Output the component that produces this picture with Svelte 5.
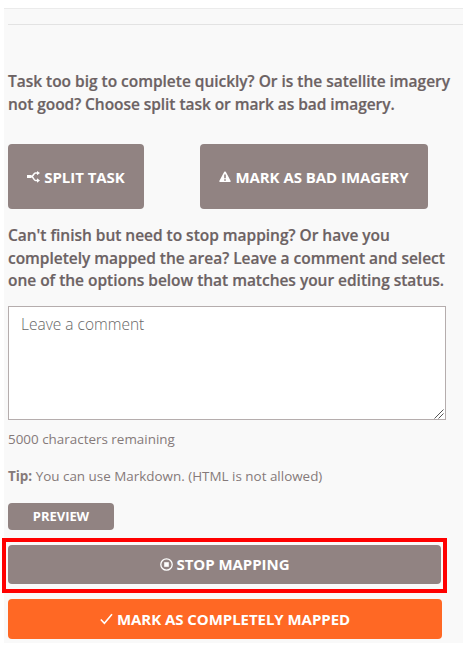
<script>
  const splitLines = [
    'Task too big to complete quickly? Or is the satellite imagery',
    'not good? Choose split task or mark as bad imagery.'
  ];
  const stopLines = [
    "Can't finish but need to stop mapping? Or have you",
    'completely mapped the area? Leave a comment and select',
    'one of the options below that matches your editing status.'
  ];
</script>

<main>
  <section class="panel">
    <hr />
    <p class="lead first">{#each splitLines as line}<span>{line}</span>{/each}</p>

    <div class="actions">
      <button class="split">
        <svg width="13" height="12" viewBox="0 0 13 12"><path d="M0 5.5h4.5C6.5 5.5 6.5 2 8.5 2H11M4.5 5.5C6.5 5.5 6.5 9.5 8.5 9.5H11" fill="none" stroke="#fff" stroke-width="1.6" /><path d="M0 4h4.5v3H0zM10 0l3 2-3 2.3zM10 7.3l3 2.2-3 2.2z" fill="#fff" /></svg>
        <span>SPLIT TASK</span>
      </button>
      <button class="bad">
        <svg width="12" height="12" viewBox="0 0 12 12"><path fill-rule="evenodd" d="M5.2.8Q6 0 6.8.8L11.7 10q.2 1-.7 1H1Q.1 11 .3 10zM5.2 3.6v3.6h1.6V3.6zM5.2 8.3v1.4h1.6V8.3z" fill="#fff" /></svg>
        <span>MARK AS BAD IMAGERY</span>
      </button>
    </div>

    <p class="lead">{#each stopLines as line}<span>{line}</span>{/each}</p>

    <div class="field">
      <span>Leave a comment</span>
      <svg class="grip" width="10" height="10" viewBox="0 0 10 10"><path d="M.5 9.5l9-9M4.5 9.5l5-5" stroke="#555" stroke-width="1" fill="none" /></svg>
    </div>
    <p class="small count"><span>5000 characters remaining</span></p>
    <p class="small tip"><span><b>Tip:</b> You can use Markdown. (HTML is not allowed)</span></p>
    <button class="preview"><span>PREVIEW</span></button>

    <div class="highlight">
      <button class="stop">
        <svg width="13" height="13" viewBox="0 0 13 13"><circle cx="6.5" cy="6.5" r="5.7" fill="none" stroke="#fff" stroke-width="1.3" /><path d="M4.2 4.2h4.6v4.6H4.2z" fill="#fff" /></svg>
        <span>STOP MAPPING</span>
      </button>
    </div>
    <button class="done">
      <svg width="13" height="12" viewBox="0 0 13 12"><path d="M.8 6.5l3.6 3.7L12 1.2" fill="none" stroke="#fff" stroke-width="1.6" /></svg>
      <span>MARK AS COMPLETELY MAPPED</span>
    </button>
  </section>
</main>

<style>
  :global(body) { margin: 0; background: #fff; }
  main { width: 463px; height: 646px; overflow: hidden; padding: 8px 0 0 4px; box-sizing: border-box; font-family: "Open Sans", sans-serif; }
  .panel { height: 635px; box-sizing: border-box; border-top: 1px solid #ebebeb; background: #f9f9f9; padding-left: 4px; display: flex; flex-direction: column; align-items: flex-start; }
  hr { width: 100%; height: 1px; border: 0; background: #e3e3e3; margin: 15px 0 0; flex: none; }
  p { margin: 0; white-space: nowrap; }
  .lead { font-size: 15.5px; line-height: 22.5px; font-weight: 600; letter-spacing: -0.025px; color: #6c6263; -webkit-text-stroke: 0.2px #6c6263; }
  .lead span { display: block; }
  .first { margin-top: 45px; }
  .first span:last-child { letter-spacing: -0.06px; }
  .actions { display: flex; gap: 56px; margin: 29px 0 15px; }
  button { border: 0; padding: 0; margin: 0; border-radius: 4px; background: #918382; color: #fff; font: 700 15px/22px "Open Sans", sans-serif; letter-spacing: -0.05px; display: flex; align-items: center; justify-content: center; gap: 4px; white-space: nowrap; flex: none; }
  button svg { display: block; flex: none; }
  .split { width: 136px; height: 65px; }
  .bad { width: 228px; height: 65px; }
  .field { position: relative; width: 438px; height: 114px; box-sizing: border-box; margin-top: 14px; border: 1px solid #b5adad; background: #fff; padding: 6px 12px; font-size: 15.5px; line-height: 22px; font-weight: 300; color: #666; flex: none; }
  .grip { position: absolute; right: 1px; bottom: 0; }
  .small { font-size: 13.43px; line-height: 20px; color: #857a7a; }
  .count { margin-top: 9px; }
  .tip { margin-top: 17px; }
  .preview { width: 106px; height: 27px; margin-top: 17px; font-size: 13px; }
  .highlight { width: 445px; height: 55px; box-sizing: border-box; border: 4px solid #f00; margin: 8px 0 0 -6px; background: #f9f9f9; padding: 3px 0 0 2px; flex: none; }
  .stop { width: 433px; height: 39px; }
  .done { width: 434px; height: 40px; margin-top: 6px; background: #ff6824; }
</style>
